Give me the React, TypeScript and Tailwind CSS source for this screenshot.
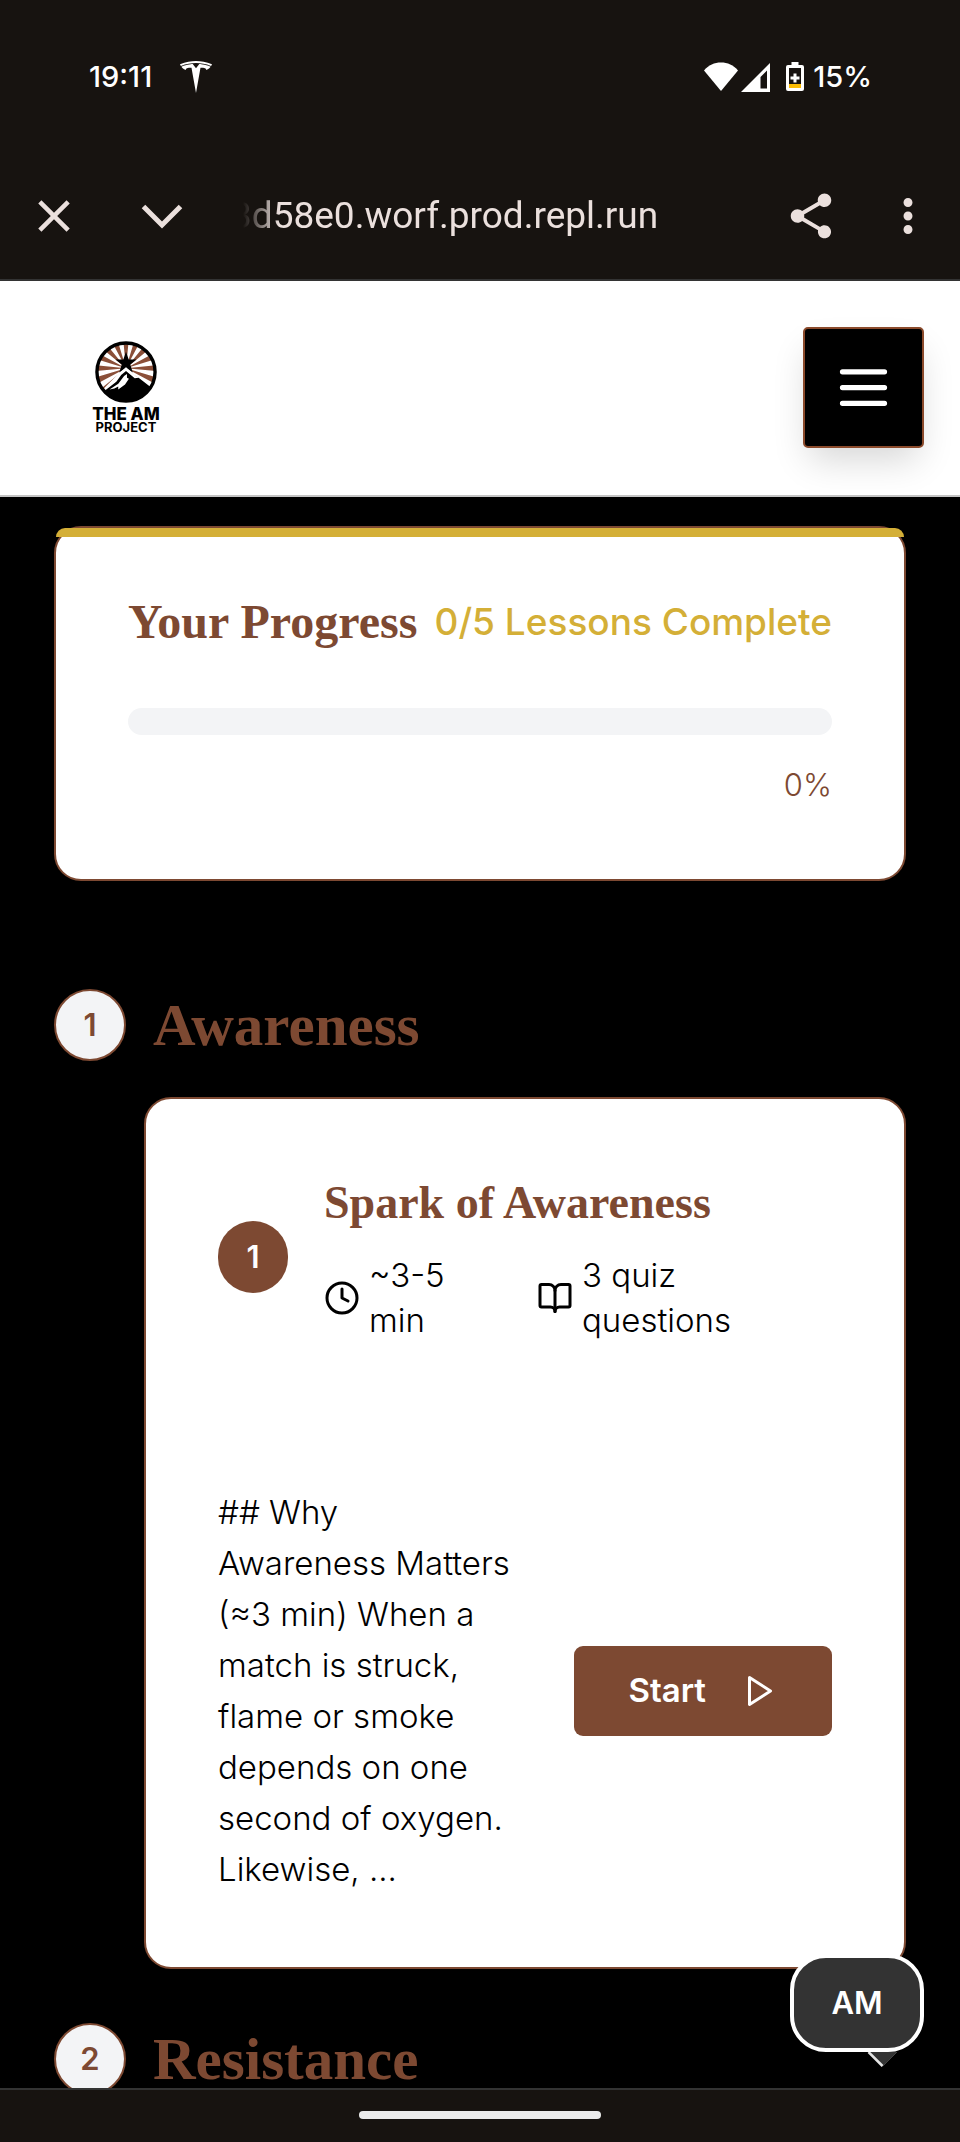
import React from "react";
import { MdClose, MdMoreVert, MdShare } from "react-icons/md";
import { SiTesla } from "react-icons/si";

const sans = "font-['Inter','Liberation_Sans',sans-serif]";
const serif = "font-['Liberation_Serif',serif]";

function StatusBar() {
  return (
    <div className="flex h-[154px] shrink-0 items-center justify-between pr-[88px] pl-[89px] text-[29px] font-medium text-white">
      <div className="flex items-center gap-7">
        <span>19:11</span>
        <SiTesla size={32} aria-label="Tesla" />
      </div>
      <div className="flex items-center">
        <svg width="34" height="30" viewBox="0 0 34 30" fill="#fff" aria-hidden="true">
          <path d="M0 8.500C4.500 3.200 10.500 .6 17 .6S29.500 3.200 34 8.500L17 29z" />
        </svg>
        <svg className="ml-[3px]" width="30" height="30" viewBox="0 0 30 30" aria-hidden="true">
          <path fillRule="evenodd" fill="#fff" d="M0 30L29 1V30zM19.500 15V26.500H26V8.500z" />
        </svg>
        <svg className="ml-[15px]" width="18" height="30" viewBox="0 0 18 30" aria-hidden="true">
          <path fill="#fff" d="M5.500 0h7v3H16a2 2 0 0 1 2 2v22a2 2 0 0 1-2 2H2a2 2 0 0 1-2-2V5a2 2 0 0 1 2-2h3.500z" />
          <path fill="#171310" d="M3 6h12v16H3z" />
          <path fill="#fbbc04" d="M3 22h12v4H3z" />
          <path fill="#fff" d="M7.500 11.500h3v3h3v3h-3v3h-3v-3h-3v-3h3z" />
        </svg>
        <span className="ml-[9px]">15%</span>
      </div>
    </div>
  );
}

function BrowserBar() {
  return (
    <div className="flex h-[127px] shrink-0 items-center border-b-2 border-[#333333] pr-[25px] pb-[2px] pl-[27px] text-[#ebe0dd]">
      <button type="button" aria-label="Close tab">
        <MdClose size={54} />
      </button>
      <button type="button" aria-label="Minimise" className="ml-[54px]">
        <svg width="54" height="54" viewBox="0 0 54 54" fill="none" stroke="currentColor" strokeWidth="5">
          <path d="M8.500 17.500L27 36L45.500 17.500" />
        </svg>
      </button>
      <div className="ml-[54px] flex min-w-0 flex-1 justify-start overflow-hidden font-['Roboto',sans-serif] text-[37px] leading-[48px] whitespace-nowrap [mask-image:linear-gradient(to_right,transparent,black_36px)]">
        <span className="-ml-[12px]">3d58e0.worf.prod.repl.run</span>
      </div>
      <button type="button" aria-label="Share">
        <MdShare size={54} />
      </button>
      <button type="button" aria-label="More options" className="ml-[43px]">
        <MdMoreVert size={54} />
      </button>
    </div>
  );
}

const rays = Array.from({ length: 16 }, (_, i) => {
  const a = ((i * 22.5 - 5.6 - 90) * Math.PI) / 180;
  const b = ((i * 22.5 + 5.6 - 90) * Math.PI) / 180;
  return `M32 28L${32 + 46 * Math.cos(a)} ${28 + 46 * Math.sin(a)}L${32 + 46 * Math.cos(b)} ${28 + 46 * Math.sin(b)}z`;
}).join("");

function Logo() {
  return (
    <a href="#" className="flex w-[72px] flex-col items-center text-black">
      <svg width="62" height="62" viewBox="0 0 64 64" aria-hidden="true">
        <clipPath id="disc">
          <circle cx="32" cy="32" r="30" />
        </clipPath>
        <g clipPath="url(#disc)">
          <path d="M0 0h64v64H0z" fill="#fff" />
          <path d={rays} fill="#8b4f38" />
          <path d="M32 26L8 50v14h48V50L42 36z" fill="#fff" />
          <path d="M32 11l2.800 8.200h8l-6.400 5 2.600 8.300-7-5.200-7 5.200 2.600-8.300-6.400-5h8z" />
          <path d="M32 27L10 49v15h50V48L44 36.500l-2 1z" fill="#fff" />
          <path d="M32 31l-5 4-5 7L9 52v12h53V51L45 38l-4 .5z" />
          <path d="M33 34l-3 2-6 8-9 6 5-1 4-2v3l7-5 4-6-2-1z" fill="#fff" />
        </g>
        <circle cx="32" cy="32" r="30" fill="none" stroke="#000" strokeWidth="3.500" />
      </svg>
      <span className="mt-1 text-[17px] leading-[14px] font-extrabold whitespace-nowrap">THE AM</span>
      <span className="text-[13px] leading-[13px] font-bold">PROJECT</span>
    </a>
  );
}

function SiteHeader() {
  return (
    <header className="flex h-[216px] shrink-0 items-center justify-between border-b-2 border-[#c4c4c4] bg-white pr-9 pb-[2px] pl-[90px]">
      <Logo />
      <button
        type="button"
        aria-label="Open menu"
        className="flex size-[121px] items-center justify-center rounded-[5px] border-2 border-[#8b4a2b] bg-black text-white shadow-[0_18px_34px_-6px_rgba(0,0,0,0.16)]"
      >
        <svg width="63" height="63" viewBox="0 0 24 24" fill="none" stroke="currentColor" strokeWidth="2" strokeLinecap="round">
          <path d="M4 6h16M4 12h16M4 18h16" />
        </svg>
      </button>
    </header>
  );
}

function ProgressCard() {
  return (
    <section className="relative rounded-[27px] border-2 border-[#7d4932] bg-white px-[72px] pt-[62px] pb-[72px]">
      <div className="absolute inset-x-0 top-0 h-[9px] rounded-t-[9px] bg-[#d4af37]" />
      <div className="flex items-center justify-between whitespace-nowrap">
        <h2 className={`${serif} text-[48px] leading-[64px] font-bold text-[#7d4932]`}>Your Progress</h2>
        <span className="text-[37px] leading-[64px] font-medium text-[#d4af37]">0/5 Lessons Complete</span>
      </div>
      <div role="progressbar" aria-label="Course progress" aria-valuenow={0} className="mt-[54px] h-[27px] rounded-full bg-[#f3f4f6]" />
      <p className="mt-[27px] text-right text-[31px] leading-[45px] font-light text-[#7d4932]">0%</p>
    </section>
  );
}

function SectionTitle({ number, title }: { number: number; title: string }) {
  return (
    <div className="flex items-center gap-[27px]">
      <span className="flex size-[72px] shrink-0 items-center justify-center rounded-full border-2 border-[#7d4932] bg-[#f3f4f6] text-[31px] font-semibold text-[#7d4932]">
        {number}
      </span>
      <h2 className={`${serif} text-[59px] leading-[72px] font-bold text-[#7d4932]`}>{title}</h2>
    </div>
  );
}

function LessonCard() {
  return (
    <article className="mt-9 ml-[90px] rounded-[27px] border-2 border-[#7d4932] bg-white p-[72px] text-black">
      <div className="flex items-center gap-9">
        <span className="flex h-[72px] w-[70px] shrink-0 items-center justify-center rounded-full bg-[#7d4932] text-[31px] font-semibold text-white">
          1
        </span>
        <div>
          <h3 className={`${serif} text-[46px] leading-[64px] font-bold text-[#7d4932]`}>Spark of Awareness</h3>
          <div className="mt-[18px] flex text-[33px] leading-[45px] font-light">
            <div className="flex w-[213px] items-center gap-[9px]">
              <svg className="shrink-0" width="36" height="36" viewBox="0 0 24 24" fill="none" stroke="currentColor" strokeWidth="2" strokeLinecap="round" strokeLinejoin="round" aria-hidden="true">
                <circle cx="12" cy="12" r="10" />
                <path d="M12 6v6l4 2" />
              </svg>
              <span>
                ~3-5
                <br />
                min
              </span>
            </div>
            <div className="flex items-center gap-[9px]">
              <svg className="shrink-0" width="36" height="36" viewBox="0 0 24 24" fill="none" stroke="currentColor" strokeWidth="2" strokeLinecap="round" strokeLinejoin="round" aria-hidden="true">
                <path d="M12 7v14" />
                <path d="M3 18a1 1 0 0 1-1-1V4a1 1 0 0 1 1-1h5a4 4 0 0 1 4 4 4 4 0 0 1 4-4h5a1 1 0 0 1 1 1v13a1 1 0 0 1-1 1h-6a3 3 0 0 0-3 3 3 3 0 0 0-3-3z" />
              </svg>
              <span>
                3 quiz
                <br />
                questions
              </span>
            </div>
          </div>
        </div>
      </div>
      <div className="mt-[144px] flex items-center justify-between">
        <p className="text-[33px] leading-[51px] font-light">
          ## Why
          <br />
          Awareness Matters
          <br />
          (≈3 min) When a
          <br />
          match is struck,
          <br />
          flame or smoke
          <br />
          depends on one
          <br />
          second of oxygen.
          <br />
          Likewise, ...
        </p>
        <button type="button" className="flex h-[90px] items-center gap-9 rounded-[9px] bg-[#7d4932] px-[54px] text-[33px] font-semibold text-white">
          Start
          <svg width="36" height="36" viewBox="0 0 24 24" fill="none" stroke="currentColor" strokeWidth="2" strokeLinecap="round" strokeLinejoin="round" aria-hidden="true">
            <path d="M5 3l14 9-14 9z" />
          </svg>
        </button>
      </div>
    </article>
  );
}

function ChatBubble() {
  return (
    <div className="absolute right-9 bottom-9">
      <button
        type="button"
        aria-label="AM chat"
        className="flex h-[98px] w-[134px] items-center justify-center rounded-[36px] border-4 border-white bg-[#333333] text-[31px] font-semibold text-white"
      >
        AM
      </button>
      <svg className="absolute top-full left-[77px]" width="32" height="16" viewBox="0 0 32 16" aria-hidden="true">
        <path d="M1 0h29L15.500 14.500z" fill="#333333" />
        <path d="M1.500 0L15.500 14" stroke="#e5e5e5" strokeWidth="2.500" fill="none" />
        <path d="M15.500 14.500L30 0" stroke="#555555" strokeWidth=".7" fill="none" />
      </svg>
    </div>
  );
}

export default function App() {
  return (
    <div className={`${sans} flex h-screen flex-col bg-[#171310]`}>
      <StatusBar />
      <BrowserBar />
      <SiteHeader />
      <div className="relative min-h-0 flex-1 bg-black">
        <main className="h-full overflow-hidden px-[54px] pt-[29px]">
          <ProgressCard />
          <section className="mt-[108px]">
            <SectionTitle number={1} title="Awareness" />
            <LessonCard />
          </section>
          <section className="mt-[54px]">
            <SectionTitle number={2} title="Resistance" />
          </section>
        </main>
        <ChatBubble />
      </div>
      <div className="flex h-[54px] shrink-0 items-start justify-center border-t-2 border-[#333333] pt-[21px]">
        <div className="h-2 w-[242px] rounded-full bg-[#ebebeb]" />
      </div>
    </div>
  );
}
